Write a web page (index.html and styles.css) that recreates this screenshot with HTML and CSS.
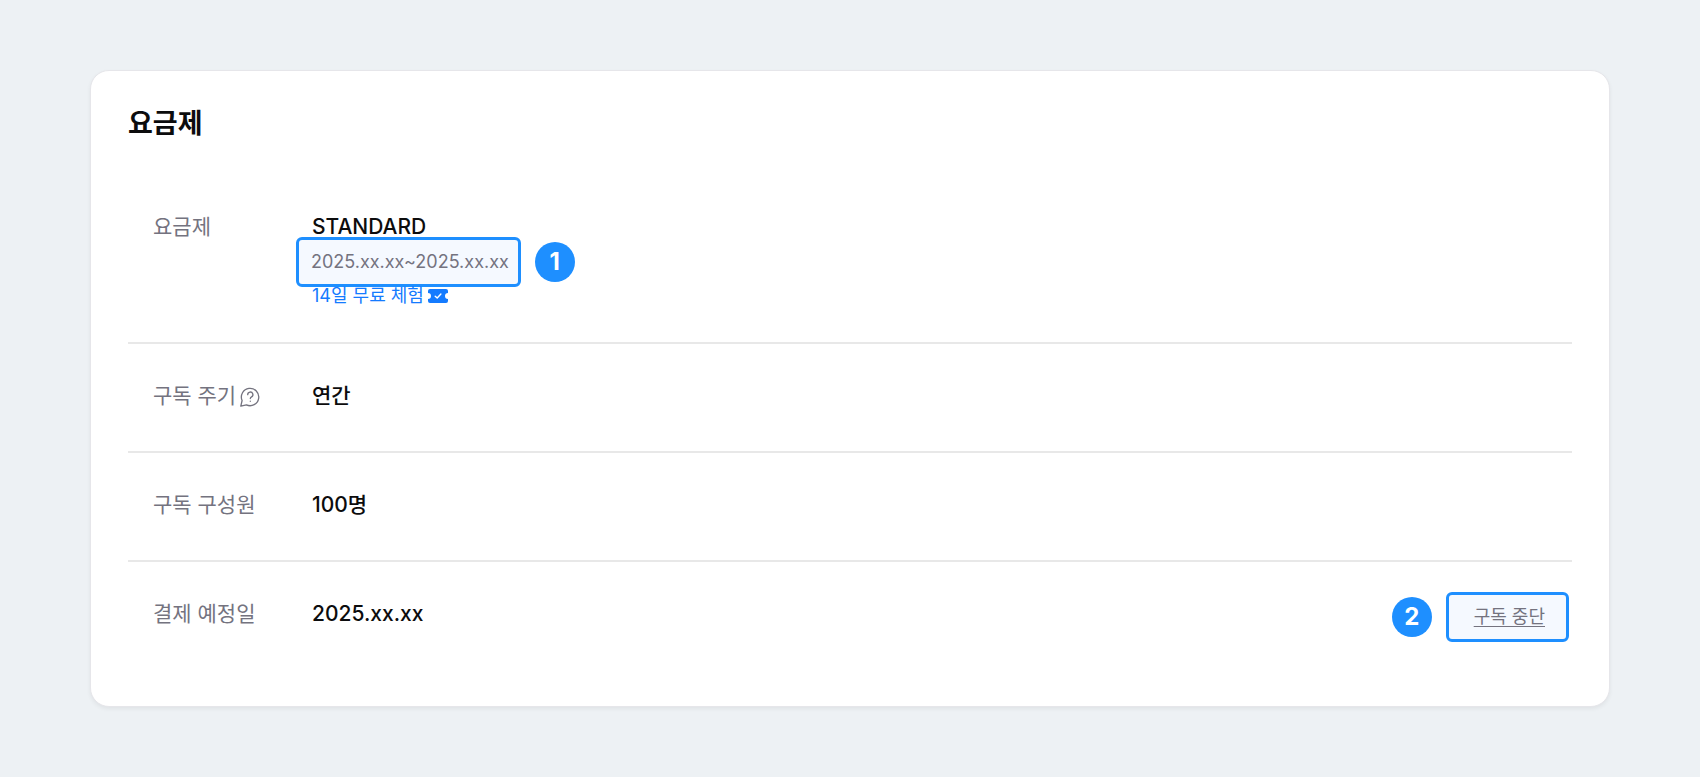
FILE: index.html
```html
<!DOCTYPE html>
<html lang="ko">
<head>
    <meta charset="UTF-8">
    <meta name="viewport" content="width=device-width, initial-scale=1.0">
    <title>요금제</title>
    <link rel="stylesheet" href="styles.css">
</head>
<body>
    <main class="page">
        <section class="card">
            <h1 class="card-title">요금제</h1>
            <dl class="plan-list">
                <div class="plan-row plan-row-first">
                    <dt>요금제</dt>
                    <dd>
                        <p class="plan-name">STANDARD</p>
                        <div class="marked marked-period">
                            <span class="highlight period">2025.xx.xx~2025.xx.xx</span>
                            <span class="badge">1</span>
                        </div>
                        <p class="trial">
                            14일 무료 체험
                            <svg class="ticket" viewBox="0 0 20 14" aria-hidden="true">
                                <path fill="#147bff" d="M2 0h16a2 2 0 0 1 2 2v2a3 3 0 0 0 0 6v2a2 2 0 0 1-2 2H2a2 2 0 0 1-2-2v-2a3 3 0 0 0 0-6V2a2 2 0 0 1 2-2z"/>
                                <path fill="none" stroke="#fff" stroke-width="1.400" stroke-linecap="round" stroke-linejoin="round" d="M7.200 7.200l2 1.900 3.700-4"/>
                            </svg>
                        </p>
                    </dd>
                </div>
                <div class="plan-row">
                    <dt>
                        구독 주기
                        <svg class="help" viewBox="0 0 20 20" fill="none" stroke="#74737f" stroke-width="1.300" stroke-linecap="round" stroke-linejoin="round" aria-hidden="true">
                            <path d="M.8 19.200l1.300-5.700A8.700 8.700 0 1 1 6.400 17.900z"/>
                            <path d="M7.700 7.700a2.600 2.600 0 1 1 3.900 2.200c-.9.5-1.300.9-1.300 1.700"/>
                            <path d="M10.300 14.200v.1"/>
                        </svg>
                    </dt>
                    <dd>연간</dd>
                </div>
                <div class="plan-row">
                    <dt>구독 구성원</dt>
                    <dd>100명</dd>
                </div>
                <div class="plan-row">
                    <dt>결제 예정일</dt>
                    <dd>2025.xx.xx</dd>
                    <dd class="marked marked-stop">
                        <span class="badge">2</span>
                        <button type="button" class="highlight stop">구독 중단</button>
                    </dd>
                </div>
            </dl>
        </section>
    </main>
</body>
</html>
```

FILE: styles.css
```css
* {
    box-sizing: border-box;
}

body {
    margin: 0;
    background-color: #fff;
    font-family: Inter, "Noto Sans CJK KR", sans-serif;
    font-size: 21px;
    line-height: 32px;
    color: #0c0c0d;
}

h1, p, dl, dd {
    margin: 0;
}

.page {
    min-height: calc(100vh - 1px);
    padding: 70px 90px;
    background-color: #edf1f4;
}

.card {
    padding: 34px 37px 37px;
    background-color: #fff;
    border: 1px solid #e6e6ea;
    border-radius: 19px;
    box-shadow: 0 2px 4px rgba(0, 0, 0, 0.06);
}

.card-title {
    font-size: 27px;
    font-weight: 600;
    line-height: 38px;
}

.plan-row {
    display: flex;
    align-items: center;
    min-height: 109px;
    padding: 0 3px 3px 25px;
}

.plan-row + .plan-row {
    border-top: 2px solid #e8e8e8;
}

.plan-row-first {
    align-items: flex-start;
    padding-top: 68px;
    padding-bottom: 30px;
}

dt {
    display: flex;
    align-items: center;
    gap: 4px;
    width: 159px;
    color: #74737f;
}

dd {
    font-weight: 500;
}

.marked {
    display: flex;
    align-items: center;
    gap: 14px;
}

/* the frame is taller than its line and overlaps the lines around it */
.marked-period {
    margin: -6px 0 -7px -16px;
}

.marked-stop {
    margin-top: 6px;
    margin-left: auto;
}

.highlight {
    height: 50px;
    border: 3px solid #1e8fff;
    border-radius: 6px;
    background-color: #f5f9ff;
    color: #74737f;
    font-family: inherit;
    font-weight: 400;
    line-height: 44px;
}

.period {
    padding: 0 9px 0 12px;
    font-size: 18px;
}

.stop {
    padding: 0 21px 0 25px;
    font-size: 18px;
    text-decoration: underline;
    text-underline-offset: 3px;
    cursor: pointer;
}

.badge {
    width: 40px;
    height: 40px;
    border-radius: 50%;
    background-color: #1e8fff;
    color: #fff;
    font-size: 24px;
    font-weight: 700;
    line-height: 40px;
    text-align: center;
}

.trial {
    display: flex;
    align-items: center;
    gap: 4px;
    color: #147bff;
    font-size: 18px;
    font-weight: 400;
}

.ticket {
    width: 20px;
    height: 14px;
}

.help {
    width: 20px;
    height: 20px;
    margin-top: 2px;
}
```
